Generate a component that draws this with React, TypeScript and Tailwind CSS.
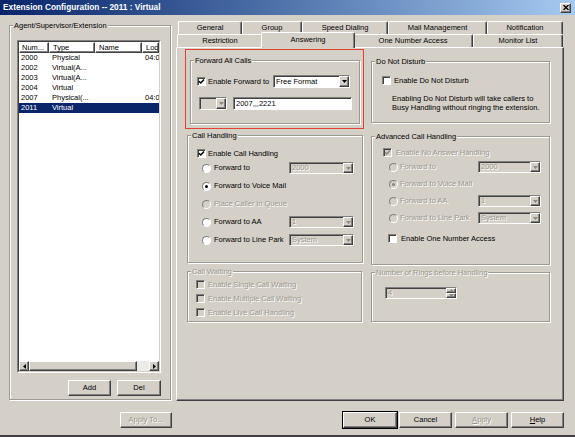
import React from "react";

const dis = "text-[#9a978f] [text-shadow:1px_1px_0_#ffffff]";
const raised =
  "border border-t-white border-l-white border-r-[#404040] border-b-[#404040] shadow-[inset_-1px_-1px_0_#808080]";
const sunken =
  "border border-t-[#808080] border-l-[#808080] border-r-white border-b-white shadow-[inset_1px_1px_0_#404040]";
const etched = "border border-[#9d9a93] shadow-[inset_1px_1px_0_#ffffff,1px_1px_0_#ffffff]";

function Check({ checked, disabled }: { checked?: boolean; disabled?: boolean }) {
  return (
    <span
      className={`relative inline-block w-[9px] h-[9px] shrink-0 ${sunken} ${
        disabled ? "bg-[#d4d0c8]" : "bg-white"
      }`}
    >
      {checked && (
        <svg viewBox="0 0 7 7" className="absolute left-0 top-0 w-[7px] h-[7px]">
          <path
            d="M1 3.2 L2.8 5 L6 1.6"
            fill="none"
            stroke={disabled ? "#8a877f" : "#000"}
            strokeWidth="1.5"
          />
        </svg>
      )}
    </span>
  );
}

function Radio({ checked, disabled }: { checked?: boolean; disabled?: boolean }) {
  return (
    <span
      className={`relative inline-block w-[9px] h-[9px] shrink-0 rounded-full border border-t-[#808080] border-l-[#808080] border-r-white border-b-white ${
        disabled ? "bg-[#d4d0c8]" : "bg-white"
      }`}
    >
      {checked && (
        <span
          className={`absolute left-[2px] top-[2px] w-[3px] h-[3px] rounded-full ${
            disabled ? "bg-[#8a877f]" : "bg-black"
          }`}
        />
      )}
    </span>
  );
}

function Arrow({ disabled }: { disabled?: boolean }) {
  return (
    <span className={`w-[10px] self-stretch ${raised} flex items-center justify-center bg-[#d4d0c8]`}>
      <svg viewBox="0 0 5 3" className="w-[5px] h-[3px]">
        <path d="M0 0 H5 L2.5 3 Z" fill={disabled ? "#8a877f" : "#000"} />
      </svg>
    </span>
  );
}

function Combo({
  value,
  className,
  disabled,
}: {
  value: string;
  className: string;
  disabled?: boolean;
}) {
  return (
    <div
      className={`flex items-center shrink-0 ${sunken} ${disabled ? "bg-[#d4d0c8]" : "bg-white"} ${className}`}
    >
      <span className={`flex-1 pl-[2px] whitespace-nowrap overflow-hidden ${disabled ? dis : ""}`}>{value}</span>
      <Arrow disabled={disabled} />
    </div>
  );
}

function Group({
  label,
  className,
  children,
  disabledLabel,
}: {
  label: string;
  className: string;
  children?: React.ReactNode;
  disabledLabel?: boolean;
}) {
  return (
    <div className={`relative shrink-0 ${etched} ${className}`}>
      <span
        className={`absolute -top-[5px] left-[3px] px-[1px] bg-[#d4d0c8] leading-[9px] whitespace-nowrap ${
          disabledLabel ? dis : ""
        }`}
      >
        {label}
      </span>
      {children}
    </div>
  );
}

function Btn({
  children,
  className,
  disabled,
  def,
}: {
  children: React.ReactNode;
  className: string;
  disabled?: boolean;
  def?: boolean;
}) {
  return (
    <div
      className={`h-[16px] shrink-0 flex items-center justify-center bg-[#d4d0c8] ${raised} ${
        def ? "ring-1 ring-black" : ""
      } ${disabled ? dis : ""} ${className}`}
    >
      {children}
    </div>
  );
}

const tab =
  "h-[13px] shrink-0 flex items-center justify-center bg-[#d4d0c8] border-t border-l border-r border-t-white border-l-white border-r-[#404040] rounded-t-[2px] shadow-[inset_-1px_0_0_#808080]";

const rows = [
  { n: "2000", t: "Physical", l: "04:0" },
  { n: "2002", t: "Virtual(A...", l: "" },
  { n: "2003", t: "Virtual(A...", l: "" },
  { n: "2004", t: "Virtual", l: "" },
  { n: "2007", t: "Physical(...", l: "04:0" },
  { n: "2011", t: "Virtual", l: "", sel: true },
];

export default function App() {
  return (
    <div className="w-[575px] h-[437px] bg-[#d4d0c8] flex flex-col overflow-hidden font-['Liberation_Sans',Arial,sans-serif] text-[7.5px] leading-none text-black">
      {/* title bar */}
      <div className="h-[15px] shrink-0 flex items-center pl-[3px] pr-[4px] bg-linear-to-r from-[#0a246a] to-[#a6caf0]">
        <span className="text-white font-bold text-[8.3px]">Extension Configuration -- 2011 : Virtual</span>
        <div className={`ml-auto w-[11px] h-[10px] bg-[#d4d0c8] ${raised} flex items-center justify-center`}>
          <svg viewBox="0 0 6 5" className="w-[6px] h-[5px]">
            <path d="M0.5 0 L5.5 5 M5.5 0 L0.5 5" stroke="#000" strokeWidth="1.3" />
          </svg>
        </div>
      </div>

      {/* main */}
      <div className="flex pl-[9px] h-[386px] shrink-0">
        {/* left group */}
        <Group label="Agent/Supervisor/Extension" className="mt-[10px] w-[162px] h-[375px] flex flex-col">
          <div className="ml-[7px] mt-[14px] w-[144px] h-[333px] border border-t-[#808080] border-l-[#808080] border-r-white border-b-white">
            <div className="w-full h-full border border-t-[#404040] border-l-[#404040] border-r-[#d4d0c8] border-b-[#d4d0c8] flex flex-col bg-white">
              <div className="h-[11px] shrink-0 flex">
                <div className={`w-[30px] ${raised} flex items-center pl-[2px]`}>Num...</div>
                <div className={`w-[46px] ${raised} flex items-center pl-[3px]`}>Type</div>
                <div className={`w-[47px] ${raised} flex items-center pl-[3px]`}>Name</div>
                <div className={`flex-1 ${raised} flex items-center pl-[3px] overflow-hidden`}>Loca</div>
              </div>
              <div className="flex-1 flex flex-col pt-[0px]">
                {rows.map((r) => (
                  <div
                    key={r.n}
                    className={`h-[10px] flex items-center whitespace-nowrap ${
                      r.sel ? "bg-[#0a246a] text-white" : ""
                    }`}
                  >
                    <span className="w-[30px] pl-[2px]">{r.n}</span>
                    <span className="w-[46px] pl-[3px] overflow-hidden">{r.t}</span>
                    <span className="w-[47px] pl-[3px]"></span>
                    <span className="flex-1 pl-[3px] overflow-hidden">{r.l}</span>
                  </div>
                ))}
              </div>
              <div className="h-[10px] shrink-0 flex bg-[#ecebe8]">
                <div className={`w-[10px] ${raised} flex items-center justify-center bg-[#d4d0c8]`}>
                  <svg viewBox="0 0 3 5" className="w-[3px] h-[5px]">
                    <path d="M3 0 V5 L0 2.5 Z" fill="#000" />
                  </svg>
                </div>
                <div className={`w-[108px] ${raised} bg-[#d4d0c8]`} />
                <div className="flex-1" />
                <div className={`w-[10px] ${raised} flex items-center justify-center bg-[#d4d0c8]`}>
                  <svg viewBox="0 0 3 5" className="w-[3px] h-[5px]">
                    <path d="M0 0 V5 L3 2.5 Z" fill="#000" />
                  </svg>
                </div>
              </div>
            </div>
          </div>
          <div className="mt-[7px] flex justify-end pr-[9px] gap-[6px]">
            <Btn className="w-[43px]">Add</Btn>
            <Btn className="w-[44px]">Del</Btn>
          </div>
        </Group>

        {/* tab control */}
        <div className="ml-[5px] mt-[6px] w-[388px] flex flex-col">
          <div className="flex pl-[2px] h-[13px]">
            <div className={`${tab} w-[64px]`}>General</div>
            <div className={`${tab} w-[60px]`}>Group</div>
            <div className={`${tab} w-[86px]`}>Speed Dialing</div>
            <div className={`${tab} w-[99px]`}>Mail Management</div>
            <div className={`${tab} w-[76px]`}>Notification</div>
          </div>
          <div className="flex items-end pl-[1px] h-[13px]">
            <div className={`${tab} w-[86px]`}>Restriction</div>
            <div className={`${tab} w-[94px] h-[16px] -mx-[2px] -mb-[1px] relative z-10 pb-[2px]`}>Answering</div>
            <div className={`${tab} w-[120px]`}>One Number Access</div>
            <div className={`${tab} w-[90px]`}>Monitor List</div>
          </div>

          {/* panel */}
          <div
            className={`h-[354px] shrink-0 border border-t-white border-l-white border-r-[#404040] border-b-[#404040] shadow-[inset_-1px_-1px_0_#808080] flex pl-[8px] pt-[1px]`}
          >
            {/* left column */}
            <div className="flex flex-col w-[179px] shrink-0">
              <div className="h-[80px] border border-[#e34234] pl-[4px] pt-[10px]">
                <Group label="Forward All Calls" className="w-[170px] h-[64px] pl-[6px] pt-[14px]">
                  <div className="flex items-center h-[13px]">
                    <Check checked />
                    <span className="ml-[2px] w-[65px] whitespace-nowrap">Enable Forward to</span>
                    <Combo value="Free Format" className="w-[77px] h-[13px]" />
                  </div>
                  <div className="flex items-center mt-[9px] pl-[2px]">
                    <Combo value="" disabled className="w-[28px] h-[13px]" />
                    <div className={`ml-[6px] w-[119px] h-[13px] ${sunken} bg-white pl-[2px] flex items-center`}>
                      2007,,,2221
                    </div>
                  </div>
                </Group>
              </div>

              <Group label="Call Handling" className="mt-[6px] ml-[2px] w-[176px] h-[128px] pl-[9px] pt-[13px]">
                <div className="flex items-center h-[9px]">
                  <Check checked />
                  <span className="ml-[2px]">Enable Call Handling</span>
                </div>
                <div className="mt-[4px] ml-[5px] flex flex-col gap-[6px]">
                  <div className="flex items-center h-[12px]">
                    <Radio />
                    <span className="ml-[3px] w-[75px] whitespace-nowrap">Forward to</span>
                    <Combo value="2000" disabled className="w-[65px] h-[12px]" />
                  </div>
                  <div className="flex items-center h-[12px]">
                    <Radio checked />
                    <span className="ml-[3px] whitespace-nowrap">Forward to Voice Mail</span>
                  </div>
                  <div className="flex items-center h-[12px]">
                    <Radio disabled />
                    <span className={`ml-[3px] whitespace-nowrap ${dis}`}>Place Caller in Queue</span>
                  </div>
                  <div className="flex items-center h-[12px]">
                    <Radio />
                    <span className="ml-[3px] w-[75px] whitespace-nowrap">Forward to AA</span>
                    <Combo value="1" disabled className="w-[65px] h-[12px]" />
                  </div>
                  <div className="flex items-center h-[12px]">
                    <Radio />
                    <span className="ml-[3px] w-[75px] whitespace-nowrap">Forward to Line Park</span>
                    <Combo value="System" disabled className="w-[65px] h-[12px]" />
                  </div>
                </div>
              </Group>

              <Group
                label="Call Waiting"
                disabledLabel
                className="mt-[8px] ml-[2px] w-[175px] h-[51px] pl-[8px] pt-[8px] flex flex-col gap-[5px]"
              >
                {["Enable Single Call Waiting", "Enable Multiple Call Waiting", "Enable Live Call Handling"].map(
                  (t) => (
                    <div key={t} className="flex items-center h-[9px]">
                      <Check disabled />
                      <span className={`ml-[3px] whitespace-nowrap ${dis}`}>{t}</span>
                    </div>
                  )
                )}
              </Group>
            </div>

            {/* right column */}
            <div className="flex flex-col ml-[7px] w-[179px] shrink-0">
              <Group label="Do Not Disturb" className="mt-[12px] w-[179px] h-[62px] pl-[10px] pt-[14px]">
                <div className="flex items-center h-[9px]">
                  <Check />
                  <span className="ml-[3px]">Enable Do Not Disturb</span>
                </div>
                <div className="ml-[10px] mt-[9px] leading-[9px] whitespace-nowrap">
                  Enabling Do Not Disturb will take callers to
                  <br />
                  Busy Handling without ringing the extension.
                </div>
              </Group>

              <Group label="Advanced Call Handling" className="mt-[13px] w-[179px] h-[129px] pl-[11px] pt-[11px]">
                <div className="flex items-center h-[9px]">
                  <Check checked disabled />
                  <span className={`ml-[4px] ${dis}`}>Enable No Answer Handling</span>
                </div>
                <div className="mt-[4px] ml-[6px] flex flex-col gap-[5px]">
                  <div className="flex items-center h-[12px]">
                    <Radio disabled />
                    <span className={`ml-[2px] w-[78px] whitespace-nowrap ${dis}`}>Forward to</span>
                    <Combo value="2000" disabled className="w-[63px] h-[12px]" />
                  </div>
                  <div className="flex items-center h-[12px]">
                    <Radio checked disabled />
                    <span className={`ml-[2px] whitespace-nowrap ${dis}`}>Forward to Voice Mail</span>
                  </div>
                  <div className="flex items-center h-[12px]">
                    <Radio disabled />
                    <span className={`ml-[2px] w-[78px] whitespace-nowrap ${dis}`}>Forward to AA</span>
                    <Combo value="1" disabled className="w-[63px] h-[12px]" />
                  </div>
                  <div className="flex items-center h-[12px]">
                    <Radio disabled />
                    <span className={`ml-[2px] w-[78px] whitespace-nowrap ${dis}`}>Forward to Line Park</span>
                    <Combo value="System" disabled className="w-[63px] h-[12px]" />
                  </div>
                </div>
                <div className="mt-[10px] ml-[5px] flex items-center h-[9px]">
                  <Check />
                  <span className="ml-[4px]">Enable One Number Access</span>
                </div>
              </Group>

              <Group
                label="Number of Rings before Handling"
                disabledLabel
                className="mt-[7px] w-[179px] h-[50px] pl-[13px] pt-[14px]"
              >
                <div className={`w-[72px] h-[12px] ${sunken} bg-[#d4d0c8] flex items-center`}>
                  <span className={`flex-1 pl-[2px] ${dis}`}>4</span>
                  <div className="w-[10px] self-stretch flex flex-col">
                    <div className={`flex-1 ${raised} flex items-center justify-center`}>
                      <svg viewBox="0 0 5 3" className="w-[5px] h-[3px]">
                        <path d="M0 3 H5 L2.5 0 Z" fill="#8a877f" />
                      </svg>
                    </div>
                    <div className={`flex-1 ${raised} flex items-center justify-center`}>
                      <svg viewBox="0 0 5 3" className="w-[5px] h-[3px]">
                        <path d="M0 0 H5 L2.5 3 Z" fill="#8a877f" />
                      </svg>
                    </div>
                  </div>
                </div>
              </Group>
            </div>
          </div>
        </div>
      </div>

      {/* bottom buttons */}
      <div className="flex mt-[11px] pl-[120px] shrink-0">
        <Btn className="w-[52px]" disabled>
          Apply To...
        </Btn>
        <Btn className="w-[54px] ml-[171px]" def>
          OK
        </Btn>
        <Btn className="w-[53px] ml-[2px]">Cancel</Btn>
        <Btn className="w-[53px] ml-[3px]" disabled>
          <span className="underline">A</span>pply
        </Btn>
        <Btn className="w-[53px] ml-[3px]">
          <span className="underline">H</span>elp
        </Btn>
      </div>
      <div className="mt-auto h-[2px] shrink-0 bg-[#404040]" />
    </div>
  );
}
